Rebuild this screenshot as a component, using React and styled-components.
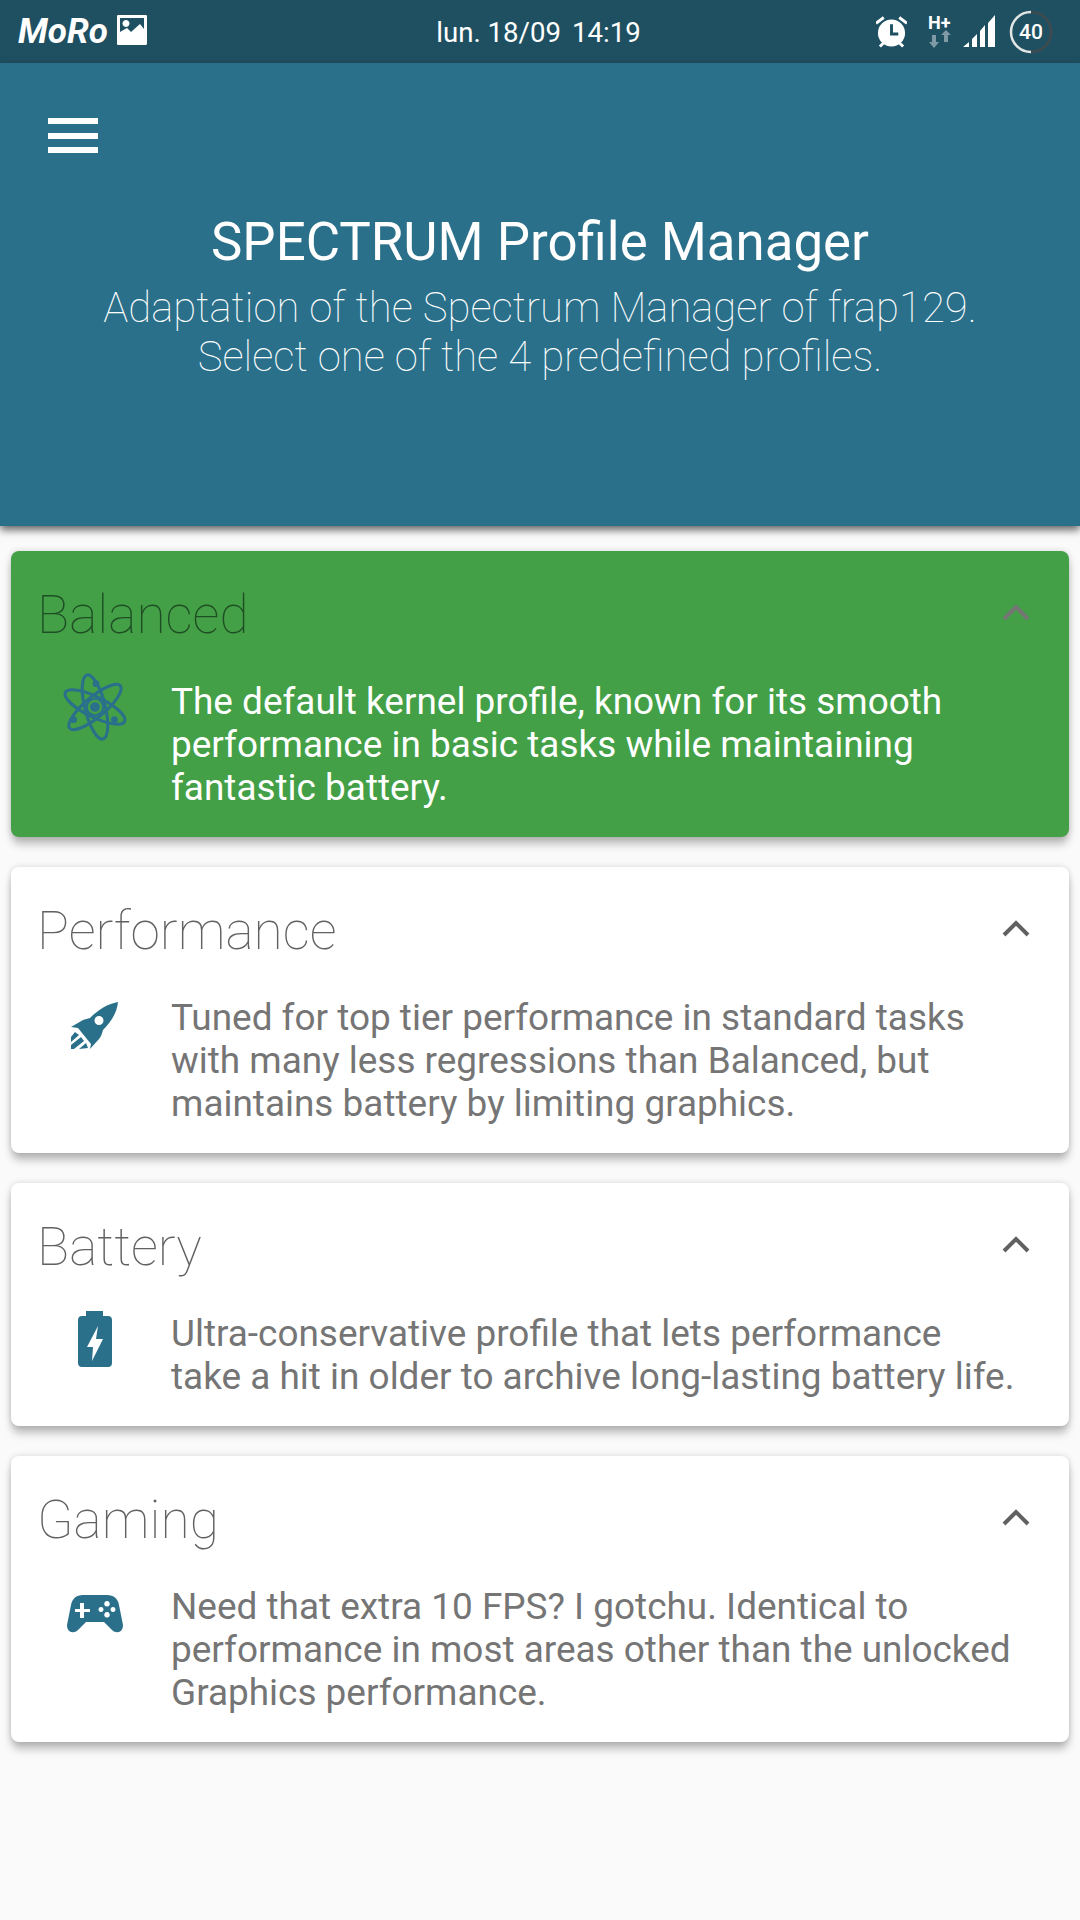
import React from "react";
import styled, { createGlobalStyle } from "styled-components";

const Global = createGlobalStyle`
  html, body { margin: 0; padding: 0; background: #fafafa; }
  body { font-family: Roboto, "Liberation Sans", sans-serif; }
  * { box-sizing: border-box; }
`;
const Page = styled.div`
  width: 1080px; height: 1920px; background: #fafafa; overflow: hidden;
  display: flex; flex-direction: column;
`;
const StatusBar = styled.div`
  height: 63px; flex: none; background: #1f5062; color: #fff;
  display: grid; grid-template-columns: 1fr auto 1fr; align-items: center;
  padding: 0 27px 0 18px;
`;
const StatusLeft = styled.div`display: flex; align-items: center; gap: 9px;`;
const Carrier = styled.span`font-size: 35px; font-weight: 700; font-style: italic; line-height: 63px;`;
const Clock = styled.div`
  font-size: 27.6px; display: flex; gap: 11px; margin-left: 6px; padding-top: 2px;
`;
const StatusRight = styled.div`display: flex; justify-content: flex-end; align-items: center;`;
const Header = styled.header`
  height: 463px; flex: none; background: #2b708a; color: #fff;
  box-shadow: 0 4px 8px rgba(0,0,0,.6);
  position: relative; z-index: 1;
  padding: 55px 0 0; display: flex; flex-direction: column; align-items: center;
`;
const Menu = styled.div`
  align-self: flex-start; margin-left: 48px; width: 50px; height: 35px; flex: none;
  display: flex; flex-direction: column; justify-content: space-between;
  span { display: block; height: 6px; background: #fff; }
`;
const Title = styled.h1`
  margin: 57px 0 9px; font-size: 52.8px; font-weight: 400; line-height: 64px;
`;
const Sub = styled.p`
  margin: 0; font-size: 41.85px; font-weight: 100; line-height: 49px; text-align: center;
  color: #fff;
`;
const List = styled.div`
  padding: 25px 11px 0; display: flex; flex-direction: column; gap: 30px;
`;
const Card = styled.section`
  background: ${p => p.$active ? "#43a047" : "#fff"};
  border-radius: 8px;
  box-shadow: 0 8px 9px -1px rgba(0,0,0,.25), 0 0 6px rgba(0,0,0,.15);
  padding: 36px 28px 28px 26px;
`;
const CardHead = styled.div`
  display: flex; justify-content: space-between; align-items: center; height: 56px;
`;
const CardTitle = styled.h2`
  margin: 0; font-size: 53.3px; font-weight: 100; line-height: 56px;
  color: ${p => p.$active ? "#1f4d24" : "#616161"};
`;
const Chevron = styled.svg`width: 28px; height: 18px; margin-right: 11px; margin-top: -6px;`;
const CardBody = styled.div`
  display: flex; margin-top: 37px;
`;
const IconSlot = styled.div`
  flex: none; width: 134px; padding: 0 33px 0 15px;
  display: flex; justify-content: center; height: 70px;
`;
const Text = styled.p`
  margin: 0; font-size: 36.94px; line-height: 43px; font-weight: 400; white-space: nowrap;
  color: ${p => p.$active ? "#fff" : "#757575"};
`;

const Atom = () => (
  <svg width="68" height="68" viewBox="0 0 70 70" fill="none" stroke="#2b708a" strokeWidth="3.2" style={{ marginTop: -7, flex: "none" }}>
    <ellipse cx="35" cy="35" rx="34" ry="10.500" transform="rotate(26 35 35)" />
    <ellipse cx="35" cy="35" rx="34" ry="10.500" transform="rotate(-40 35 35)" />
    <ellipse cx="35" cy="35" rx="34" ry="10.500" transform="rotate(76 35 35)" />
    <circle cx="35" cy="35" r="8.500" strokeWidth="2.200" />
    <circle cx="35" cy="35" r="5" fill="#2b708a" stroke="none" />
    <circle cx="36" cy="11" r="3.500" fill="#2b708a" stroke="none" />
    <circle cx="13" cy="48" r="3.500" fill="#2b708a" stroke="none" />
    <circle cx="55" cy="48" r="3.500" fill="#2b708a" stroke="none" />
  </svg>
);
const Rocket = () => (
  <svg width="48" height="47" viewBox="0 0 48 47" fill="#2b708a" style={{ flex: "none", marginTop: 6 }}>
    <path fillRule="evenodd" d="M47 0C36 2 27 8 19 16L12 18L0 25L7 26L20 42L19 47L28 37C30 35 31 31 32 28C41 19 46 10 47 0ZM28 14a4.500 4.500 0 1 1 0 9a4.500 4.500 0 1 1 0-9Z" />
    <path d="M4 30L8 33L0 40V35ZM10 35L13 39L3 47H0V43ZM15 41L17 46L8 47Z" />
  </svg>
);
const Battery = () => (
  <svg width="34" height="56" viewBox="0 0 34 56" fill="#2b708a" style={{ flex: "none", marginTop: -1 }}>
    <path fillRule="evenodd" d="M8 0H25V5H30C33 5 34 7 34 9V52C34 54 33 56 30 56H4C1 56 0 54 0 52V9C0 7 1 5 4 5H8ZM20 15L9 36H15L14 50L25 28H18Z" />
  </svg>
);
const Pad = () => (
  <svg width="56" height="38" viewBox="0 0 56 38" fill="#2b708a" style={{ flex: "none", marginTop: 10 }}>
    <path fillRule="evenodd" d="M16 0H40C47 0 51 4 52 10L56 30C56 35 53 38 49 37C47 37 46 36 44 34L37 27H19L12 34C10 36 9 37 7 37C3 38 0 35 0 30L4 10C5 4 9 0 16 0ZM13 8V14H8V17H13V23H17V17H23V14H17V8ZM40 6a2.800 2.800 0 1 0 .01 0ZM34 12a2.500 2.500 0 1 0 .01 0ZM46 12a2.500 2.500 0 1 0 .01 0ZM40 17a2.800 2.800 0 1 0 .01 0Z" />
  </svg>
);

const cards = [
  { title: "Balanced", active: true, Icon: Atom, lines: ["The default kernel profile, known for its smooth", "performance in basic tasks while maintaining", "fantastic battery."] },
  { title: "Performance", Icon: Rocket, lines: ["Tuned for top tier performance in standard tasks", "with many less regressions than Balanced, but", "maintains battery by limiting graphics."] },
  { title: "Battery", Icon: Battery, lines: ["Ultra-conservative profile that lets performance", "take a hit in older to archive long-lasting battery life."] },
  { title: "Gaming", Icon: Pad, lines: ["Need that extra 10 FPS? I gotchu. Identical to", "performance in most areas other than the unlocked", "Graphics performance."] },
];

export default function App() {
  return (
    <Page>
      <Global />
      <StatusBar>
        <StatusLeft>
          <Carrier>MoRo</Carrier>
          <svg width="30" height="30" viewBox="0 0 30 30" style={{ marginTop: -4 }}>
            <path fill="#fff" fillRule="evenodd" d="M1 0H29C30 0 30 1 30 1V28C30 30 29 30 29 30H1C0 30 0 29 0 29V1C0 1 0 0 1 0ZM3 3V17L10 13L14 17L23 9L27 14V3ZM9 5a3.500 3.500 0 1 1-.01 0Z" />
          </svg>
        </StatusLeft>
        <Clock><span>lun. 18/09</span><span>14:19</span></Clock>
        <StatusRight>
          <svg width="31" height="34" viewBox="0 0 32 34" style={{ marginRight: 21 }}>
            <circle cx="16" cy="18" r="14" fill="#fff" />
            <path d="M0 8L8 2M32 8L24 2M4 32L8 28M28 32L24 28" stroke="#fff" strokeWidth="3" />
            <path d="M16 9V19H23" stroke="#1f5062" strokeWidth="3" fill="none" />
          </svg>
          <svg width="27" height="44" viewBox="0 0 27 44" style={{ marginRight: 8 }}>
            <text x="0" y="19" fontFamily="Roboto" fontWeight="700" fontSize="18" fill="#fff">H+</text>
            <path d="M4 25H8V32H11L6 38L1 32H4ZM16 32V25H13L18 20L23 25H20V32Z" fill="#7f9aa5" />
          </svg>
          <svg width="32" height="33" viewBox="0 0 32 33" style={{ marginRight: 14 }}>
            <path d="M0 32L6 27V32ZM9 24L14 19V32H9ZM17 16L22 10V32H17ZM25 8L32 0V32H25Z" fill="#fff" />
          </svg>
          <svg width="44" height="44" viewBox="0 0 44 44">
            <circle cx="22" cy="22" r="20" fill="none" stroke="#3f4a4e" strokeWidth="2.500" />
            <path d="M22 2A20 20 0 0 0 22 42" fill="none" stroke="#dfe6e8" strokeWidth="2.500" />
            <text x="22" y="29" textAnchor="middle" fontFamily="Roboto" fontWeight="500" fontSize="21" fill="#fff">40</text>
          </svg>
        </StatusRight>
      </StatusBar>
      <Header>
        <Menu><span /><span /><span /></Menu>
        <Title>SPECTRUM Profile Manager</Title>
        <Sub>Adaptation of the Spectrum Manager of frap129.<br />Select one of the 4 predefined profiles.</Sub>
      </Header>
      <List>
        {cards.map(({ title, active, Icon, lines }) => (
          <Card key={title} $active={active}>
            <CardHead>
              <CardTitle $active={active}>{title}</CardTitle>
              <Chevron viewBox="0 0 28 18">
                <path d="M2 16L14 4L26 16" fill="none" stroke={active ? "#757575" : "#616161"} strokeWidth="4" />
              </Chevron>
            </CardHead>
            <CardBody>
              <IconSlot><Icon /></IconSlot>
              <Text $active={active}>{lines.map((l, i) => <React.Fragment key={i}>{i > 0 && <br />}{l}</React.Fragment>)}</Text>
            </CardBody>
          </Card>
        ))}
      </List>
    </Page>
  );
}
